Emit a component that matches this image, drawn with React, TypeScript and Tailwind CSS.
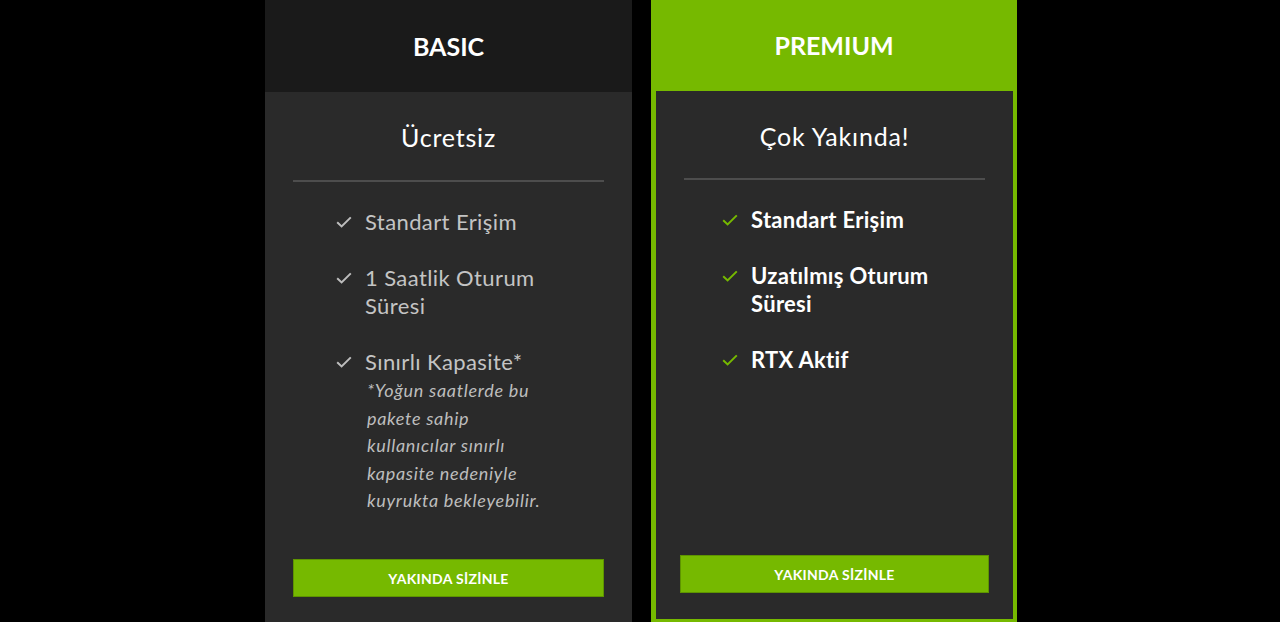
import React from "react";

const font = { fontFamily: "Lato, 'Noto Sans', sans-serif" };

function Check({ color }: { color: string }) {
  return (
    <svg width="16" height="12" viewBox="0 0 16 12" fill="none" className="shrink-0">
      <path d="M1.2 6.2 L5.6 10.4 L14.8 1.4" stroke={color} strokeWidth="2" strokeLinecap="butt" strokeLinejoin="miter" />
    </svg>
  );
}

function Item({
  lines,
  premium,
  note,
}: {
  lines: string[];
  premium?: boolean;
  note?: string[];
}) {
  return (
    <li className="flex items-start">
      <div className="w-[29px] h-[28px] flex items-center">
        <Check color={premium ? "#76b900" : "#bdbdbd"} />
      </div>
      <div>
        {lines.map((l) => (
          <div
            key={l}
            className={
              premium
                ? "whitespace-nowrap text-[22px] leading-[28px] tracking-[0.3px] font-bold text-white"
                : "whitespace-nowrap text-[22px] leading-[28px] tracking-[0.4px] text-[#c4c4c4]"
            }
          >
            {l}
          </div>
        ))}
        {note && (
          <div className="mt-[1px] ml-[2px]">
            {note.map((n) => (
              <div key={n} className="whitespace-nowrap italic text-[18px] leading-[27.5px] tracking-[0.7px] text-[#bdbdbd]">
                {n}
              </div>
            ))}
          </div>
        )}
      </div>
    </li>
  );
}

function Button() {
  return (
    <div className="h-[38px] bg-[#76b900] border border-[#5e9400] flex items-center justify-center text-white font-bold text-[14px] tracking-[0.3px]">
      YAKINDA SİZİNLE
    </div>
  );
}

export default function App() {
  return (
    <div className="w-[1280px] h-[622px] bg-black overflow-hidden flex justify-center pl-[2px]" style={font}>
      <div className="flex gap-[19px] items-start">
        {/* BASIC */}
        <div className="w-[367px] h-[622px] flex flex-col bg-[#2a2a2a]">
          <div className="h-[92px] bg-[#1a1a1a] flex items-center justify-center">
            <span className="text-white font-bold text-[25px] leading-none">BASIC</span>
          </div>
          <div className="flex-1 flex flex-col px-[28px] pb-[25px]">
            <div className="pt-[29px] text-center text-white text-[25px] leading-[32px] tracking-[0.8px]">Ücretsiz</div>
            <div className="mt-[27px] h-[2px] bg-[#4d4d4d]" />
            <ul className="mt-[26px] ml-[43px] flex flex-col gap-[28px]">
              <Item lines={["Standart Erişim"]} />
              <Item lines={["1 Saatlik Oturum", "Süresi"]} />
              <Item
                lines={["Sınırlı Kapasite*"]}
                note={[
                  "*Yoğun saatlerde bu",
                  "pakete sahip",
                  "kullanıcılar sınırlı",
                  "kapasite nedeniyle",
                  "kuyrukta bekleyebilir.",
                ]}
              />
            </ul>
            <div className="mt-auto">
              <Button />
            </div>
          </div>
        </div>

        {/* PREMIUM */}
        <div className="w-[366px] h-[622px] flex flex-col bg-[#76b900]">
          <div className="h-[91px] flex items-center justify-center">
            <span className="text-white font-bold text-[25px] leading-none">PREMIUM</span>
          </div>
          <div className="flex-1 ml-[5px] mr-[4px] mb-[3px] bg-[#2a2a2a] flex flex-col pb-[26px]">
            <div className="pt-[29px] text-center text-white text-[25px] leading-[32px] tracking-[0.8px]">Çok Yakında!</div>
            <div className="mt-[26px] mx-[28px] h-[2px] bg-[#4d4d4d]" />
            <ul className="mt-[26px] ml-[66px] flex flex-col gap-[28px]">
              <Item premium lines={["Standart Erişim"]} />
              <Item premium lines={["Uzatılmış Oturum", "Süresi"]} />
              <Item premium lines={["RTX Aktif"]} />
            </ul>
            <div className="mt-auto mx-[24px]">
              <Button />
            </div>
          </div>
        </div>
      </div>
    </div>
  );
}
